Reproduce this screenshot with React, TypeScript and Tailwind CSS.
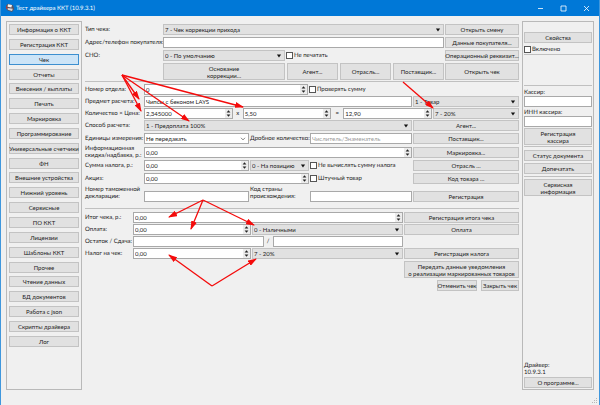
import { useId } from "react";
import type { ReactNode } from "react";

const navItems = [
  "Информация о ККТ",
  "Регистрация ККТ",
  "Чек",
  "Отчеты",
  "Внесения / выплаты",
  "Печать",
  "Маркировка",
  "Программирование",
  "Универсальные счетчики",
  "ФН",
  "Внешние устройства",
  "Нижний уровень",
  "Сервисные",
  "ПО ККТ",
  "Лицензии",
  "Шаблоны ККТ",
  "Прочее",
  "Чтение данных",
  "БД документов",
  "Работа с json",
  "Скрипты драйвера",
  "Лог",
];

// from x/y, to x/y
const arrows = [
  [122, 75, 139, 99],
  [122, 75, 141, 111],
  [122, 75, 189, 121],
  [122, 75, 243, 107],
  [403, 82, 433, 108],
  [203, 200, 169, 217],
  [203, 200, 191, 229],
  [203, 200, 254, 225],
  [212, 286, 169, 255],
  [212, 286, 256, 259],
];

interface BoxProps {
  children?: ReactNode;
  className?: string;
}

function Btn({ children, className = "w-full", active, tall }: BoxProps & { active?: boolean; tall?: boolean }) {
  return (
    <button
      type="button"
      className={`flex shrink-0 items-center justify-center border text-center whitespace-nowrap ${tall ? "h-[17px]" : "h-[11px]"} ${
        active ? "border-[#3c8fd0] bg-[#cce4f7]" : "border-[#c3c3c3] bg-[#e1e1e1]"
      } ${className}`}
    >
      {children}
    </button>
  );
}

function TextBox({ id, label, value = "", placeholder, className = "w-full" }: {
  id?: string;
  label?: string;
  value?: string;
  placeholder?: string;
  className?: string;
}) {
  return (
    <input
      id={id}
      aria-label={label}
      type="text"
      defaultValue={value}
      placeholder={placeholder}
      className={`block h-[11px] min-w-0 border border-[#a9a9a9] bg-white px-px placeholder:text-[#9a9a9a] focus:outline-none ${className}`}
    />
  );
}

function SpinBox({ id, label, value, className = "w-full" }: {
  id?: string;
  label?: string;
  value: string;
  className?: string;
}) {
  return (
    <div className={`flex h-[11px] min-w-0 border border-[#a9a9a9] bg-white ${className}`}>
      <input
        id={id}
        aria-label={label}
        type="text"
        inputMode="decimal"
        defaultValue={value}
        className="w-full min-w-0 flex-1 px-px focus:outline-none"
      />
      <svg viewBox="0 0 7 9" className="h-[9px] w-[7px] shrink-0 bg-[#ececec]">
        <path d="M3.5 1.2 5.4 3.6H1.6ZM3.5 7.8 5.4 5.4H1.6Z" fill="#222" />
      </svg>
    </div>
  );
}

function Select({ id, label, value, className = "w-full", light }: {
  id?: string;
  label?: string;
  value: string;
  className?: string;
  light?: boolean;
}) {
  return (
    <div className={`relative h-[11px] min-w-0 border ${light ? "border-[#a9a9a9] bg-white" : "border-[#c3c3c3] bg-[#e1e1e1]"} ${className}`}>
      <select id={id} aria-label={label} className="block h-full w-full appearance-none px-px focus:outline-none">
        <option>{value}</option>
      </select>
      <svg viewBox="0 0 6 4" className="pointer-events-none absolute top-[3px] right-[2px] h-1 w-1.5">
        {light ? (
          <path d="M1 .8 3 2.9 5 .8" fill="none" stroke="#666" strokeWidth=".8" />
        ) : (
          <path d="M.9.5H5.1L3 3.4Z" fill="#111" />
        )}
      </svg>
    </div>
  );
}

function Check({ children, className = "" }: BoxProps) {
  return (
    <label className={`flex items-center gap-px whitespace-nowrap ${className}`}>
      <input type="checkbox" className="h-[7px] w-[7px] shrink-0 appearance-none border border-[#555] bg-white" />
      {children}
    </label>
  );
}

function Label({ id, children, className = "" }: BoxProps & { id: string }) {
  return (
    <label htmlFor={id} className={`shrink-0 whitespace-nowrap ${className}`}>
      {children}
    </label>
  );
}

function Row({ children, className = "h-[11px] items-center" }: BoxProps) {
  return <div className={`flex gap-px ${className}`}>{children}</div>;
}

function Line({ className = "" }: BoxProps) {
  return <hr className={`border-t border-[#c0c0c0] ${className}`} />;
}

function TitleBar() {
  return (
    <header className="flex h-4 items-center bg-[#0078d7] pr-[9px] pl-1 text-white">
      <svg viewBox="0 0 10 10" className="mr-px h-2.5 w-2.5">
        <path d="M1 2.5 3 .8 8 2.2 9.2 6 7 9 2.2 7.2Z" fill="#5b5560" />
        <path d="M3 1.2 7 2 6.4 4.4 2.6 3.8Z" fill="#f4f4f4" />
        <path d="M2.6 5 7.8 5.8 7 8 2.8 6.8Z" fill="#d9d4d4" />
        <path d="M1 3.2 2.3 4 2.1 6.4 1.2 5.6Z" fill="#c8322d" />
      </svg>
      <h1 className="flex-1">Тест драйвера ККТ (10.9.3.1)</h1>
      <div className="flex gap-4">
        <button type="button" aria-label="Свернуть">
          <svg viewBox="0 0 7 7" className="h-[7px] w-[7px]">
            <path d="M1 3.5H6" stroke="#fff" strokeWidth=".8" />
          </svg>
        </button>
        <button type="button" aria-label="Развернуть">
          <svg viewBox="0 0 7 7" className="h-[7px] w-[7px]">
            <path d="M1 1H6V6H1Z" fill="none" stroke="#fff" strokeWidth=".8" />
          </svg>
        </button>
        <button type="button" aria-label="Закрыть">
          <svg viewBox="0 0 7 7" className="h-[7px] w-[7px]">
            <path d="M1 1 6 6M6 1 1 6" stroke="#fff" strokeWidth=".8" />
          </svg>
        </button>
      </div>
    </header>
  );
}

function ReceiptForm() {
  const id = useId();

  return (
    <main className="min-w-0 flex-1 pt-[3px]">
      <div className="flex flex-col gap-0.5">
        <Row>
          <Label id={`${id}type`} className="w-[77px]">Тип чека:</Label>
          <Select id={`${id}type`} value="7 - Чек коррекции прихода" className="flex-1" />
          <Btn className="w-[74px]">Открыть смену</Btn>
        </Row>
        <Row>
          <Label id={`${id}addr`} className="w-[77px]">Адрес/телефон покупателя:</Label>
          <TextBox id={`${id}addr`} className="flex-1" />
          <Btn className="w-[74px]">Данные покупателя...</Btn>
        </Row>
        <Row>
          <Label id={`${id}sno`} className="w-[77px]">СНО:</Label>
          <Select id={`${id}sno`} value="0 - По умолчанию" className="w-[122px]" />
          <Check className="flex-1">Не печатать</Check>
          <Btn className="w-[74px]">Операционный реквизит...</Btn>
        </Row>
        <div className="flex gap-px pl-[78px]">
          <Btn tall className="w-[122px]">
            Основание
            <br />
            коррекции...
          </Btn>
          <div className="grid flex-1 grid-cols-3 gap-0.5 pl-px">
            <Btn tall>Агент...</Btn>
            <Btn tall>Отрасль...</Btn>
            <Btn tall>Поставщик...</Btn>
          </div>
          <Btn tall className="w-[74px]">Открыть чек</Btn>
        </div>
      </div>

      <Line className="mt-px mb-0.5" />

      <div className="flex flex-col gap-px">
        <Row>
          <Label id={`${id}dep`} className="w-[58px]">Номер отдела:</Label>
          <SpinBox id={`${id}dep`} value="0" className="flex-1" />
          <Check className="w-[210px]">Проверять сумму</Check>
        </Row>
        <Row>
          <Label id={`${id}item`} className="w-[58px]">Предмет расчета:</Label>
          <TextBox id={`${id}item`} value="Чипсы с беконом LAYS" className="flex-1" />
          <Select label="Тип предмета" value="1 - Товар" className="w-[106px]" />
        </Row>
        <Row>
          <Label id={`${id}qty`} className="w-[58px]">Количество × Цена:</Label>
          <SpinBox id={`${id}qty`} value="2,345000" className="flex-1" />
          <span className="w-2 text-center">x</span>
          <SpinBox label="Цена" value="5,50" className="flex-1" />
          <span className="w-2.5 text-center">=</span>
          <SpinBox label="Сумма" value="12,90" className="flex-1" />
          <Select label="Ставка налога" value="7 - 20%" className="w-[86px]" />
        </Row>
        <Row>
          <Label id={`${id}way`} className="w-[58px]">Способ расчета:</Label>
          <Select id={`${id}way`} value="1 - Предоплата 100%" className="flex-1" />
          <Btn className="w-[106px]">Агент...</Btn>
        </Row>
      </div>

      <div className="mt-0.5 flex flex-col gap-0.5">
        <Row>
          <Label id={`${id}unit`} className="w-[58px]">Единицы измерения:</Label>
          <Select id={`${id}unit`} light value="Не передавать" className="flex-1" />
          <Label id={`${id}frac`} className="w-[59px]">Дробное количество:</Label>
          <TextBox id={`${id}frac`} placeholder="Числитель/Знаменатель" className="w-[102px]" />
          <Btn className="w-[106px]">Поставщик...</Btn>
        </Row>
        <Row className="h-3 items-center">
          <Label id={`${id}disc`} className="w-[58px]">
            Информационная
            <br />
            скидка/надбавка, р.:
          </Label>
          <SpinBox id={`${id}disc`} value="0,00" className="flex-1" />
          <Btn className="w-[106px]">Маркировка...</Btn>
        </Row>
        <Row>
          <Label id={`${id}tax`} className="w-[58px]">Сумма налога, р.:</Label>
          <SpinBox id={`${id}tax`} value="0,00" className="flex-1" />
          <Select label="Налог на" value="0 - На позицию" className="w-[59px]" />
          <Check className="w-[102px]">Не вычислять сумму налога</Check>
          <Btn className="w-[106px]">Отрасль ...</Btn>
        </Row>
        <Row>
          <Label id={`${id}exc`} className="w-[58px]">Акциз:</Label>
          <SpinBox id={`${id}exc`} value="0,00" className="flex-1" />
          <Check className="w-[102px]">Штучный товар</Check>
          <Btn className="w-[106px]">Код товара ...</Btn>
        </Row>
        <Row className="h-4 items-end">
          <Label id={`${id}decl`} className="w-[58px] self-start">
            Номер таможенной
            <br />
            декларации:
          </Label>
          <TextBox id={`${id}decl`} className="flex-1" />
          <Label id={`${id}country`} className="w-[59px] self-start">
            Код страны
            <br />
            происхождения:
          </Label>
          <TextBox id={`${id}country`} className="w-[102px]" />
          <Btn className="w-[106px]">Регистрация</Btn>
        </Row>
      </div>

      <Line className="mt-1.5 mb-[3px]" />

      <div className="flex flex-col gap-px">
        <Row>
          <Label id={`${id}total`} className="w-[47px]">Итог чека, р.:</Label>
          <SpinBox id={`${id}total`} value="0,00" className="flex-1" />
          <Btn className="w-[115px]">Регистрация итога чека</Btn>
        </Row>
        <Row>
          <Label id={`${id}pay`} className="w-[47px]">Оплата:</Label>
          <SpinBox id={`${id}pay`} value="0,00" className="flex-1" />
          <Select label="Тип оплаты" value="0 - Наличными" className="w-[151px]" />
          <Btn className="w-[115px]">Оплата</Btn>
        </Row>
        <Row>
          <Label id={`${id}rest`} className="w-[47px]">Остаток / Сдача:</Label>
          <TextBox id={`${id}rest`} className="flex-1" />
          <span className="w-[7px] text-center">/</span>
          <TextBox label="Сдача" className="flex-1" />
          <div className="w-[115px]" />
        </Row>
        <Row>
          <Label id={`${id}rtax`} className="w-[47px]">Налог на чек:</Label>
          <SpinBox id={`${id}rtax`} value="0,00" className="flex-1" />
          <Select label="Ставка налога на чек" value="7 - 20%" className="w-[151px]" />
          <Btn className="w-[115px]">Регистрация налога</Btn>
        </Row>
      </div>

      <div className="mt-0.5 flex flex-col items-end gap-0.5">
        <Btn tall className="w-[115px]">
          Передать данные уведомления
          <br />о реализации маркированных товаров
        </Btn>
        <div className="flex gap-1">
          <Btn className="w-10">Отменить чек</Btn>
          <Btn className="w-[38px]">Закрыть чек</Btn>
        </div>
      </div>
    </main>
  );
}

function DriverPanel() {
  const id = useId();

  return (
    <aside className="flex w-[72px] shrink-0 flex-col border border-[#b9b9b9] px-px pt-2.5 pb-px">
      <Btn>Свойства</Btn>
      <Check className="mt-0.5 h-2">Включено</Check>
      <Line className="mt-px" />
      <Line className="mt-[30px]" />
      <Label id={`${id}name`} className="mt-[3px]">Кассир:</Label>
      <TextBox id={`${id}name`} />
      <Label id={`${id}inn`} className="mt-0.5">ИНН кассира:</Label>
      <TextBox id={`${id}inn`} />
      <Btn tall className="mt-px w-full">
        Регистрация
        <br />
        кассира
      </Btn>
      <Line className="mt-px" />
      <div className="mt-[3px] flex flex-col gap-0.5">
        <Btn>Статус документа</Btn>
        <Btn>Допечатать</Btn>
      </div>
      <Line className="mt-0.5 mb-0.5" />
      <Btn tall>
        Сервисная
        <br />
        информация
      </Btn>
      <p className="mt-auto mb-px">
        Драйвер:
        <br />
        10.9.3.1
      </p>
      <Btn>О программе...</Btn>
    </aside>
  );
}

export default function App() {
  return (
    <div className="relative flex min-h-screen flex-col border-x border-[#3f97dd] bg-[#f0f0f0] font-[Lato,sans-serif] text-[6px] leading-[7px] text-[#1c1c1c] [text-rendering:geometricPrecision]">
      <TitleBar />
      <div className="flex flex-1 gap-[3px] px-[5px] pt-[5px] pb-[15px]">
        <nav className="w-[76px] shrink-0 border border-[#b9b9b9] px-0.5 pt-0.5">
          <div className="flex h-[323px] flex-col justify-between">
            {navItems.map((item) => (
              <Btn key={item} active={item === "Чек"}>
                {item}
              </Btn>
            ))}
          </div>
        </nav>
        <ReceiptForm />
        <DriverPanel />
      </div>

      <svg viewBox="0 0 600 405" className="pointer-events-none absolute top-0 -left-px h-[405px] w-[600px]">
        <defs>
          <marker id="head" viewBox="0 0 9 6" refX="8" refY="3" markerWidth="9" markerHeight="6" markerUnits="userSpaceOnUse" orient="auto">
            <path d="M0 0 9 3 0 6Z" fill="#f40b0b" />
          </marker>
        </defs>
        {arrows.map(([x1, y1, x2, y2]) => (
          <line key={`${x2}-${y2}`} x1={x1} y1={y1} x2={x2} y2={y2} stroke="#f40b0b" strokeWidth="1.3" markerEnd="url(#head)" />
        ))}
      </svg>

      <svg viewBox="0 0 6 6" className="absolute right-px bottom-px h-1.5 w-1.5">
        <path d="M4 0H5V1H4ZM4 2H5V3H4ZM4 4H5V5H4ZM2 2H3V3H2ZM2 4H3V5H2ZM0 4H1V5H0Z" fill="#b8b8b8" />
      </svg>
    </div>
  );
}
